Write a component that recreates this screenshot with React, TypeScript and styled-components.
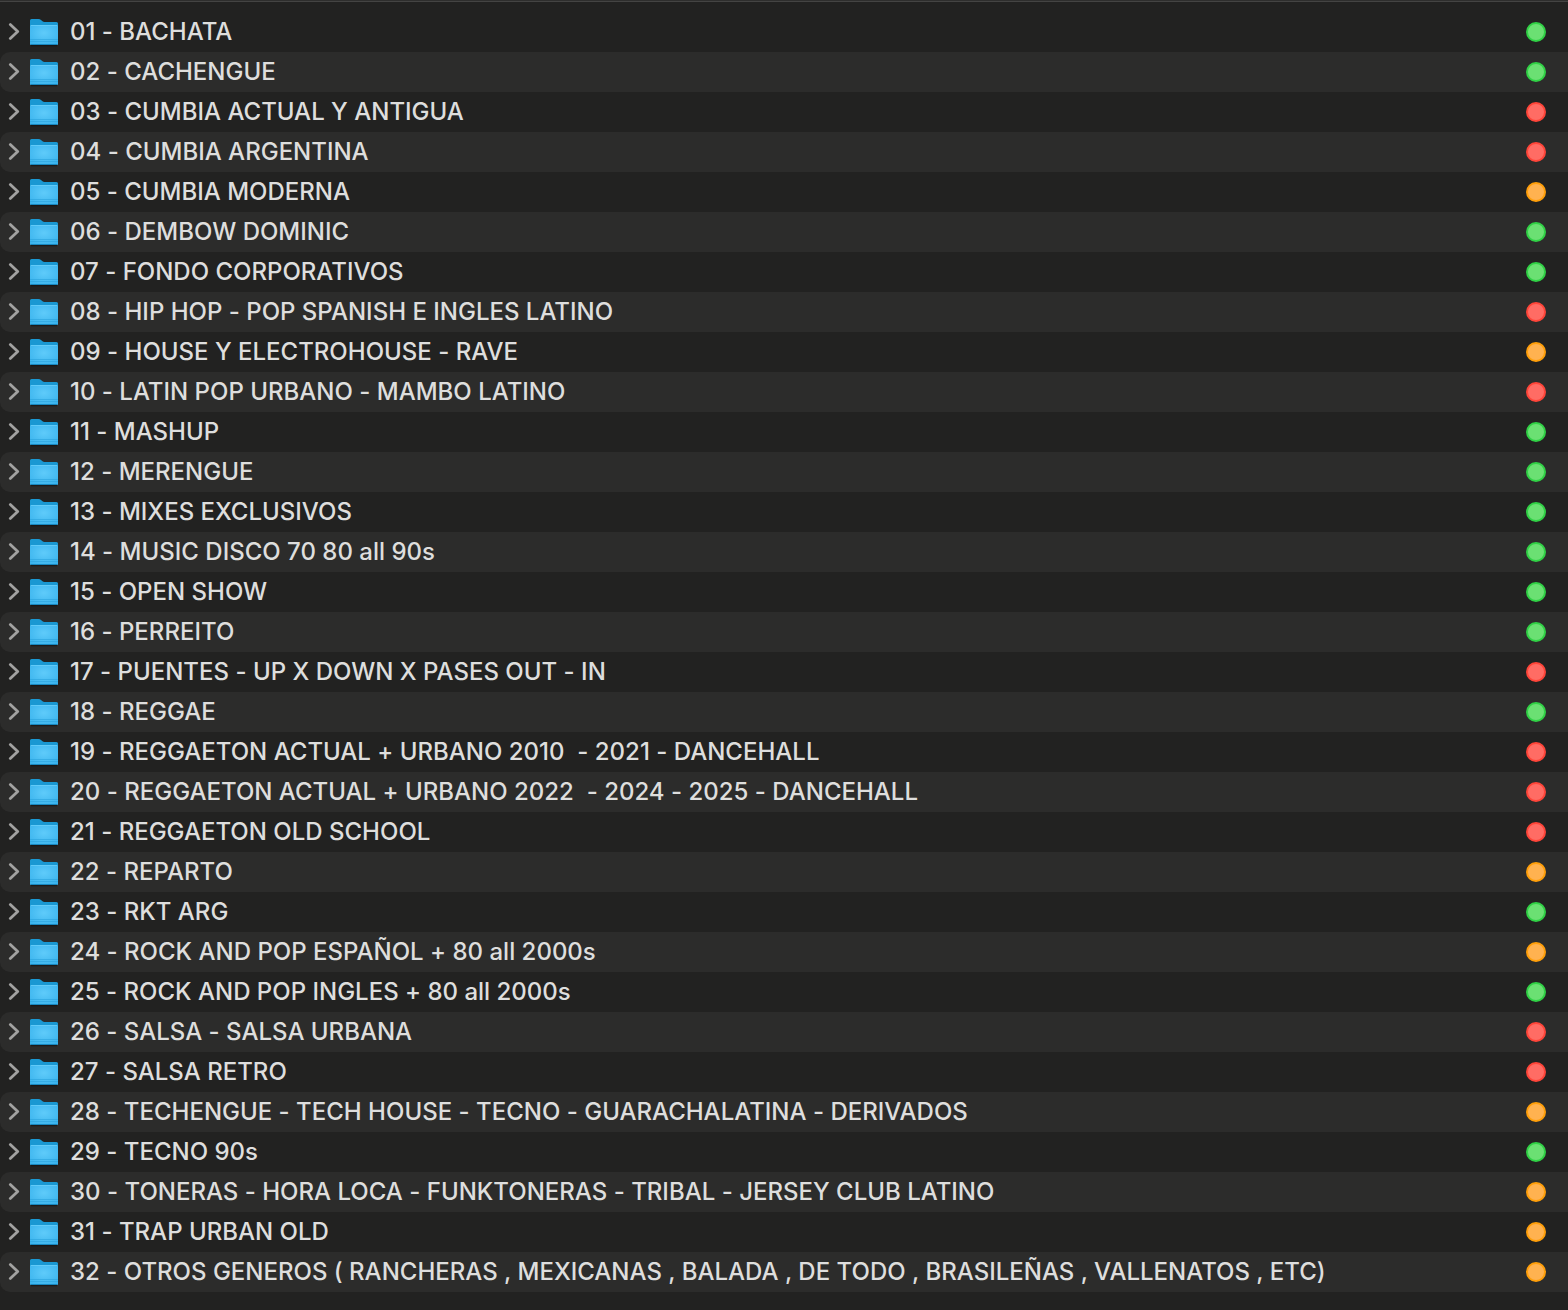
import React, { useId } from 'react';
import styled, { createGlobalStyle } from 'styled-components';

type Tag = 'green' | 'red' | 'orange';

const tags: Record<Tag, { fill: string; edge: string }> = {
  green: { fill: '#6be073', edge: '#30d145' },
  red: { fill: '#ff6c64', edge: '#ff4539' },
  orange: { fill: '#ffb250', edge: '#ff9f0a' },
};

const folders: [string, Tag][] = [
  ['01 - BACHATA', 'green'],
  ['02 - CACHENGUE', 'green'],
  ['03 - CUMBIA ACTUAL Y ANTIGUA', 'red'],
  ['04 - CUMBIA ARGENTINA', 'red'],
  ['05 - CUMBIA MODERNA', 'orange'],
  ['06 - DEMBOW DOMINIC', 'green'],
  ['07 - FONDO CORPORATIVOS', 'green'],
  ['08 - HIP HOP - POP SPANISH E INGLES LATINO', 'red'],
  ['09 - HOUSE Y ELECTROHOUSE - RAVE', 'orange'],
  ['10 - LATIN POP URBANO - MAMBO LATINO', 'red'],
  ['11 - MASHUP', 'green'],
  ['12 - MERENGUE', 'green'],
  ['13 - MIXES EXCLUSIVOS', 'green'],
  ['14 - MUSIC DISCO 70 80 all 90s', 'green'],
  ['15 - OPEN SHOW', 'green'],
  ['16 - PERREITO', 'green'],
  ['17 - PUENTES - UP X DOWN X PASES OUT - IN', 'red'],
  ['18 - REGGAE', 'green'],
  ['19 - REGGAETON ACTUAL + URBANO 2010  - 2021 - DANCEHALL', 'red'],
  ['20 - REGGAETON ACTUAL + URBANO 2022  - 2024 - 2025 - DANCEHALL', 'red'],
  ['21 - REGGAETON OLD SCHOOL', 'red'],
  ['22 - REPARTO', 'orange'],
  ['23 - RKT ARG', 'green'],
  ['24 - ROCK AND POP ESPAÑOL + 80 all 2000s', 'orange'],
  ['25 - ROCK AND POP INGLES + 80 all 2000s', 'green'],
  ['26 - SALSA - SALSA URBANA', 'red'],
  ['27 - SALSA RETRO', 'red'],
  ['28 - TECHENGUE - TECH HOUSE - TECNO - GUARACHALATINA - DERIVADOS', 'orange'],
  ['29 - TECNO 90s', 'green'],
  ['30 - TONERAS - HORA LOCA - FUNKTONERAS - TRIBAL - JERSEY CLUB LATINO', 'orange'],
  ['31 - TRAP URBAN OLD', 'orange'],
  ['32 - OTROS GENEROS ( RANCHERAS , MEXICANAS , BALADA , DE TODO , BRASILEÑAS , VALLENATOS , ETC)', 'orange'],
];

const GlobalStyle = createGlobalStyle`
  body {
    margin: 0;
    background: #222221;
    color: #dededd;
    font-family: Inter, "Liberation Sans", sans-serif;
  }
`;

const Browser = styled.main`
  box-sizing: border-box;
  min-height: 100vh;
  padding: 11px 0 18px;
  border-top: 1px solid #2e2e2d;
  box-shadow: inset 0 1px #444443;
`;

const List = styled.ul`
  margin: 0;
  padding: 0;
  list-style: none;
`;

const Row = styled.li`
  display: flex;
  align-items: center;
  height: 40px;
  padding-right: 22px;

  &:nth-child(even) {
    background: #2c2c2b;
    border-radius: 10px 0 0 10px;
  }
`;

const Disclosure = styled.button`
  display: flex;
  align-items: center;
  padding: 0 8px;
  border: 0;
  background: none;
  color: #a2a2a1;
`;

const FolderIcon = styled.svg`
  flex: none;
  margin-right: 12px;
  overflow: visible;
`;

const Name = styled.span`
  flex: 1;
  font-size: 24px;
  font-weight: 500;
  font-feature-settings: "calt" 0;
  line-height: 40px;
  white-space: pre;
`;

const Dot = styled.span<{ $tag: Tag }>`
  box-sizing: border-box;
  flex: none;
  width: 20px;
  height: 20px;
  border: 2px solid ${(p) => tags[p.$tag].edge};
  border-radius: 50%;
  background: ${(p) => tags[p.$tag].fill};
`;

const Folder = () => {
  const front = useId();
  return (
    <FolderIcon width="28" height="26" viewBox="0 0 28 26" aria-hidden="true">
      <defs>
        <radialGradient id={front} cx="0.5" cy="0.4" r="0.7">
          <stop offset="0" stopColor="#5fcbfa" />
          <stop offset="1" stopColor="#39b3ed" />
        </radialGradient>
      </defs>
      <path d="M1 26.5H27" stroke="#111" strokeWidth="1.5" opacity="0.6" />
      <path d="M0 1.500Q0 0 1.500 0H8.500Q10 0 11 1L12.500 2.300Q13.300 3 14.500 3H26.500Q28 3 28 4.500V12H0Z" fill="#1a98d2" />
      <path d="M0 7Q0 6 1 6H27Q28 6 28 7V25Q28 26 27 26H1Q0 26 0 25Z" fill={`url(#${front})`} />
      <path d="M1 6.500H27" stroke="#6ed2fb" opacity="0.7" />
      <path d="M0 20.500H28M0 22.500H28" stroke="#2ba3dd" opacity="0.6" />
      <path d="M1 25.500H27" stroke="#1787bf" />
    </FolderIcon>
  );
};

export default function App() {
  return (
    <Browser>
      <GlobalStyle />
      <List>
        {folders.map(([name, tag]) => (
          <Row key={name}>
            <Disclosure type="button" aria-label={`Expand ${name}`}>
              <svg width="14" height="18" viewBox="0 0 14 18" fill="none" stroke="currentColor" strokeWidth="2.8" strokeLinecap="round" strokeLinejoin="round">
                <path d="M2.300 1.600L9.700 8.500l-7.400 6.900" />
              </svg>
            </Disclosure>
            <Folder />
            <Name>{name}</Name>
            <Dot $tag={tag} role="img" aria-label={tag} />
          </Row>
        ))}
      </List>
    </Browser>
  );
}
